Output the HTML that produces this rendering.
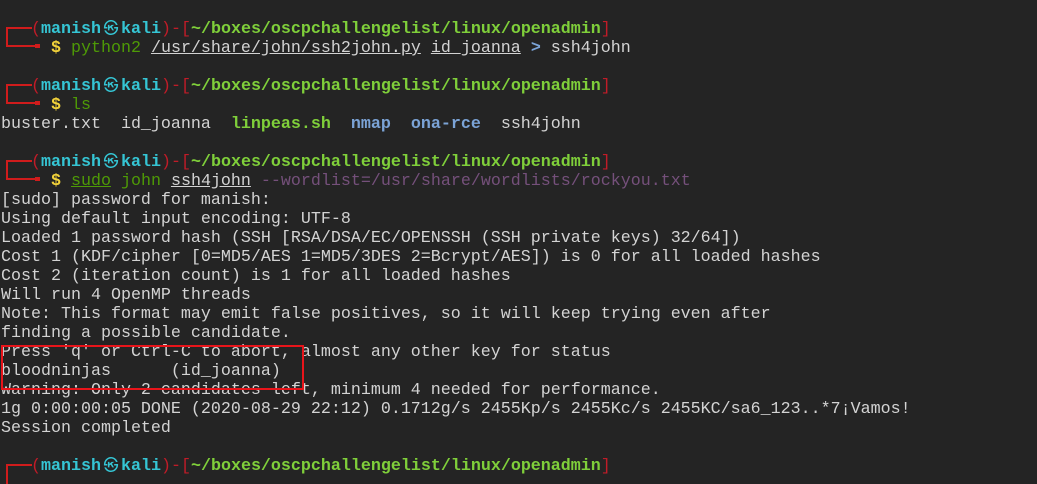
<!DOCTYPE html>
<html><head><meta charset="utf-8"><style>
html,body{margin:0;padding:0;background:#242424;width:1037px;height:460px;overflow:hidden}
#t{position:absolute;left:1px;top:20px;font-family:"Liberation Mono",monospace;font-size:16.67px;line-height:19px;color:#d3d3d3}
.l{height:19px;position:relative;white-space:pre}
.q{position:relative;top:-2px}
.r{color:#c01c28}.c{color:#35c5d4;font-weight:bold}.g{color:#7fcf3a;font-weight:bold}
.y{color:#f2d23a;font-weight:bold}.gr{color:#4e9a06}.u{text-decoration:underline}
.p{color:#75507b}.b{color:#7ba3d6;font-weight:bold}
.at{display:inline-block;width:20px;text-align:center;font-family:"Noto Sans CJK JP",sans-serif;font-size:15px;line-height:19px;color:#35c5d4;font-weight:bold}
.br{position:absolute;left:5px;top:7px;width:26px;height:20px;border-left:2px solid #d01c1c;border-top:2px solid #d01c1c;box-sizing:border-box}
.br2{position:absolute;left:5px;top:25px;width:32px;height:2px;background:#d01c1c}
.br3{position:absolute;left:34px;top:24px;width:5px;height:4px;background:#d01c1c}
#box{position:absolute;left:1px;top:345px;width:303px;height:45px;border:2px solid #e8141a;box-sizing:border-box}
</style></head><body>
<div id="t"><div class="l"><span class="br"></span><span class="br2"></span><span class="br3"></span><span class="q">   <span class="r">(</span><span class="c">manish</span><span class="at">㉿</span><span class="c">kali</span><span class="r">)-[</span><span class="g">~/boxes/oscpchallengelist/linux/openadmin</span><span class="r">]</span></span></div><div class="l">     <span class="y">$</span> <span class="gr">python2</span> <span class="u">/usr/share/john/ssh2john.py</span> <span class="u">id_joanna</span> <span class="b">&gt;</span> ssh4john</div><div class="l"> </div><div class="l"><span class="br"></span><span class="br2"></span><span class="br3"></span><span class="q">   <span class="r">(</span><span class="c">manish</span><span class="at">㉿</span><span class="c">kali</span><span class="r">)-[</span><span class="g">~/boxes/oscpchallengelist/linux/openadmin</span><span class="r">]</span></span></div><div class="l">     <span class="y">$</span> <span class="gr">ls</span></div><div class="l">buster.txt  id_joanna  <span class="g">linpeas.sh</span>  <span class="b">nmap</span>  <span class="b">ona-rce</span>  ssh4john</div><div class="l"> </div><div class="l"><span class="br"></span><span class="br2"></span><span class="br3"></span><span class="q">   <span class="r">(</span><span class="c">manish</span><span class="at">㉿</span><span class="c">kali</span><span class="r">)-[</span><span class="g">~/boxes/oscpchallengelist/linux/openadmin</span><span class="r">]</span></span></div><div class="l">     <span class="y">$</span> <span class="gr u">sudo</span> <span class="gr">john</span> <span class="u">ssh4john</span> <span class="p">--wordlist=/usr/share/wordlists/rockyou.txt</span></div><div class="l">[sudo] password for manish:</div><div class="l">Using default input encoding: UTF-8</div><div class="l">Loaded 1 password hash (SSH [RSA/DSA/EC/OPENSSH (SSH private keys) 32/64])</div><div class="l">Cost 1 (KDF/cipher [0=MD5/AES 1=MD5/3DES 2=Bcrypt/AES]) is 0 for all loaded hashes</div><div class="l">Cost 2 (iteration count) is 1 for all loaded hashes</div><div class="l">Will run 4 OpenMP threads</div><div class="l">Note: This format may emit false positives, so it will keep trying even after</div><div class="l">finding a possible candidate.</div><div class="l">Press 'q' or Ctrl-C to abort, almost any other key for status</div><div class="l">bloodninjas      (id_joanna)</div><div class="l">Warning: Only 2 candidates left, minimum 4 needed for performance.</div><div class="l">1g 0:00:00:05 DONE (2020-08-29 22:12) 0.1712g/s 2455Kp/s 2455Kc/s 2455KC/sa6_123..*7¡Vamos!</div><div class="l">Session completed</div><div class="l"> </div><div class="l"><span class="br"></span><span class="q">   <span class="r">(</span><span class="c">manish</span><span class="at">㉿</span><span class="c">kali</span><span class="r">)-[</span><span class="g">~/boxes/oscpchallengelist/linux/openadmin</span><span class="r">]</span></span></div></div>
<div id="box"></div>
</body></html>
